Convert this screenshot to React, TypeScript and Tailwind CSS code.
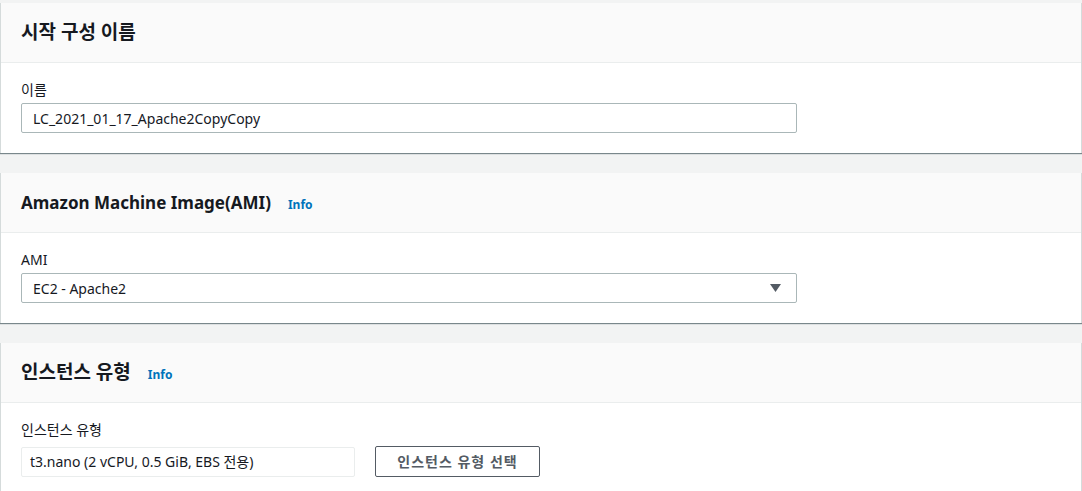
import { ReactNode } from 'react'

const font = { fontFamily: '"Noto Sans", "Noto Sans CJK KR", sans-serif' }

function Card({ title, info, ko, children }: { title: string; info?: boolean; ko?: boolean; children: ReactNode }) {
  return (
    <div className="bg-white border-x border-[#d5dbdb] shadow-[0_1px_1px_0_rgba(0,28,36,0.5)]">
      <div className="h-[60px] flex items-center px-5 bg-[#fafafa] border-b border-[#eaeded]">
        <h2 className={ko ? 'text-[19px] font-bold text-[#16191f] leading-none' : 'text-[17px] font-bold text-[#16191f] leading-none'}>
          {title}
        </h2>
        {info && <a className="ml-[17px] mt-[4px] text-[12px] font-bold text-[#0073bb]">Info</a>}
      </div>
      <div className="px-5 pt-4 pb-5">{children}</div>
    </div>
  )
}

function Label({ children }: { children: ReactNode }) {
  return <div className="text-[14px] leading-[22px] text-[#16191f] mb-[2px]">{children}</div>
}

export default function App() {
  return (
    <div className="bg-[#f2f3f3] min-h-screen pt-[3px] flex flex-col gap-5" style={font}>
      <Card title="시작 구성 이름" ko>
        <Label>이름</Label>
        <div className="w-[776px] h-[30px] border border-[#aab7b8] rounded-[2px] flex items-center px-[11px] text-[14px] text-[#16191f]">
          LC_2021_01_17_Apache2CopyCopy
        </div>
      </Card>
      <Card title="Amazon Machine Image(AMI)" info>
        <Label>AMI</Label>
        <div className="w-[776px] h-[30px] border border-[#aab7b8] rounded-[2px] flex items-center justify-between pl-[11px] pr-[15px] text-[14px] text-[#16191f]">
          <span>EC2 - Apache2</span>
          <svg width="11" height="8" viewBox="0 0 11 8">
            <path d="M0 0h11L5.5 8z" fill="#545b64" />
          </svg>
        </div>
      </Card>
      <Card title="인스턴스 유형" info ko>
        <Label>인스턴스 유형</Label>
        <div className="mt-[5px] flex items-center gap-5">
          <div className="w-[334px] h-[30px] border border-[#eaeded] rounded-[2px] flex items-center px-[8px] text-[14px] text-[#16191f]">
            t3.nano (2 vCPU, 0.5 GiB, EBS 전용)
          </div>
          <button className="w-[165px] h-[31px] border border-[#545b64] rounded-[2px] text-[14px] font-semibold text-[#545b64] tracking-[1px]">
            인스턴스 유형 선택
          </button>
        </div>
      </Card>
    </div>
  )
}
